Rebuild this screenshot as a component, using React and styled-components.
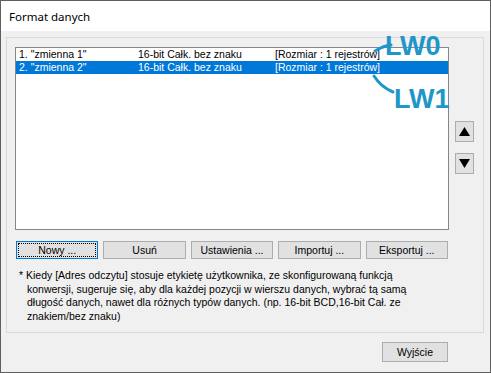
import React from 'react';
import styled, {createGlobalStyle} from 'styled-components';

const Global = createGlobalStyle`
  html, body {
    margin: 0;
    padding: 0;
    background: #ffffff;
  }
`

const Window = styled.div`
  position: relative;
  box-sizing: border-box;
  width: 491px;
  height: 373px;
  border: 1px solid #5f5f5f;
  display: flex;
  flex-direction: column;
  font-family: "Liberation Sans", Arial, sans-serif;
  font-size: 10.5px;
  color: #000;
`

const TitleBar = styled.div`
  height: 30px;
  flex: none;
  background: #fff;
  display: flex;
  align-items: center;
  padding-left: 8px;
  font-family: "Noto Sans", "Open Sans", sans-serif;
  font-size: 11.5px;
  color: #000;
`

const Body = styled.div`
  flex: 1;
  background: #f0f0f0;
  padding: 6px 6px 0 5px;
  display: flex;
  flex-direction: column;
`

const Panel = styled.div`
  box-sizing: border-box;
  height: 296px;
  border: 1px solid #dadada;
  padding: 9px 0 0 8px;
  display: flex;
  flex-direction: column;
`

const ListArea = styled.div`
  display: flex;
  gap: 6px;
`

const List = styled.div`
  box-sizing: border-box;
  width: 434px;
  height: 183px;
  border: 1px solid #828790;
  background: #fff;
`

const Row = styled.div`
  display: flex;
  height: 13px;
  line-height: 13px;
  padding-left: 3px;
  white-space: nowrap;
  background: ${p => (p.selected ? '#0078d7' : 'transparent')};
  color: ${p => (p.selected ? '#fff' : '#000')};
`

const Cell = styled.span`
  width: ${p => p.w}px;
  flex: none;
`

const Arrows = styled.div`
  display: flex;
  flex-direction: column;
  gap: 11px;
  padding-top: 74px;
`

const ArrowButton = styled.div`
  box-sizing: border-box;
  width: 19px;
  height: 21px;
  background: #e1e1e1;
  border: 1px solid #adadad;
  display: flex;
  align-items: center;
  justify-content: center;
`

const ButtonRow = styled.div`
  display: flex;
  gap: 5px;
  width: 432px;
  margin: 11px 0 0 1px;
`

const Button = styled.div`
  box-sizing: border-box;
  flex: 1;
  height: 18px;
  background: #e1e1e1;
  border: 1px solid ${p => (p.focused ? '#0078d7' : '#adadad')};
  display: flex;
  align-items: center;
  justify-content: center;
  position: relative;
  ${p => p.focused && `
    &::after {
      content: '';
      position: absolute;
      inset: 1px;
      border: 1px dotted #000;
    }
  `}
`

const Note = styled.div`
  margin-top: 10px;
  padding-left: 12px;
  text-indent: -8px;
  width: 400px;
  line-height: 13.5px;
`

const Footer = styled.div`
  display: flex;
  justify-content: flex-end;
  padding: 9px 36px 0 0;
`

const ExitButton = styled(Button)`
  flex: none;
  width: 66px;
  height: 20px;
`

const Tag = styled.div`
  position: absolute;
  left: ${p => p.x}px;
  top: ${p => p.y}px;
  font-family: "Liberation Sans", Arial, sans-serif;
  font-weight: bold;
  font-size: 27px;
  line-height: 1;
  color: #1e96c8;
`

const Overlay = styled.svg`
  position: absolute;
  left: 0;
  top: 0;
  pointer-events: none;
`

const Triangle = ({up}) => (
  <svg width="11" height="9" viewBox="0 0 11 9">
    <path d={up ? 'M5.5 0 L11 9 L0 9 Z' : 'M0 0 L11 0 L5.5 9 Z'} fill="#000" />
  </svg>
)

const rows = [
  {n: '1. "zmienna 1"', t: '16-bit Całk. bez znaku', s: '[Rozmiar : 1 rejestrów]'},
  {n: '2. "zmienna 2"', t: '16-bit Całk. bez znaku', s: '[Rozmiar : 1 rejestrów]', selected: true},
]

function App() {
  return (
    <Window>
      <Global />
      <TitleBar>Format danych</TitleBar>
      <Body>
        <Panel>
          <ListArea>
            <List>
              {rows.map(r => (
                <Row key={r.n} selected={r.selected}>
                  <Cell w={119}>{r.n}</Cell>
                  <Cell w={137}>{r.t}</Cell>
                  <Cell w={120}>{r.s}</Cell>
                </Row>
              ))}
            </List>
            <Arrows>
              <ArrowButton><Triangle up /></ArrowButton>
              <ArrowButton><Triangle /></ArrowButton>
            </Arrows>
          </ListArea>
          <ButtonRow>
            <Button focused>Nowy ...</Button>
            <Button>Usuń</Button>
            <Button>Ustawienia ...</Button>
            <Button>Importuj ...</Button>
            <Button>Eksportuj ...</Button>
          </ButtonRow>
          <Note>
            * Kiedy [Adres odczytu] stosuje etykietę użytkownika, ze skonfigurowaną funkcją konwersji, sugeruje się, aby dla każdej pozycji w wierszu danych, wybrać tą samą długość danych, nawet dla różnych typów danych. (np. 16-bit BCD,16-bit Cał. ze znakiem/bez znaku)
          </Note>
        </Panel>
        <Footer>
          <ExitButton>Wyjście</ExitButton>
        </Footer>
      </Body>
      <Overlay width="491" height="373">
        <path d="M374 50 Q382 45 390 44" stroke="#1e96c8" strokeWidth="3" fill="none" strokeLinecap="round" />
        <path d="M373 75 Q380 86 392 91" stroke="#1e96c8" strokeWidth="3" fill="none" strokeLinecap="round" />
      </Overlay>
      <Tag x={384} y={32}>LW0</Tag>
      <Tag x={393} y={85}>LW1</Tag>
    </Window>
  );
}

export default App
